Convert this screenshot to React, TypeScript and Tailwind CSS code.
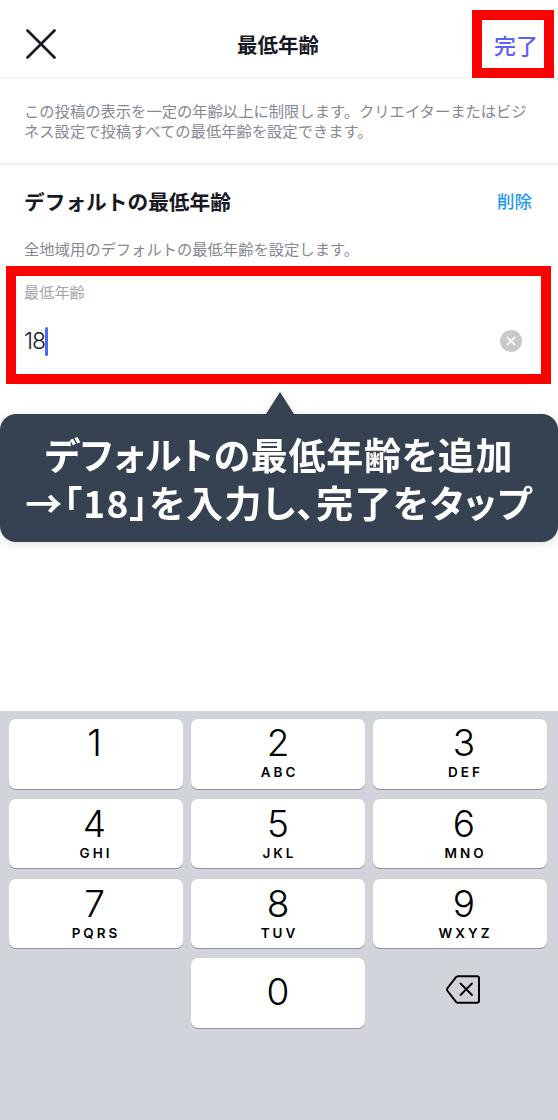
import { X } from "lucide-react";

const keys = [
  { n: "1", s: "" },
  { n: "2", s: "ABC" },
  { n: "3", s: "DEF" },
  { n: "4", s: "GHI" },
  { n: "5", s: "JKL" },
  { n: "6", s: "MNO" },
  { n: "7", s: "PQRS" },
  { n: "8", s: "TUV" },
  { n: "9", s: "WXYZ" },
];

// the labels don't sit dead centre in the outer columns
const columnOffset = ["pr-[3px]", "", "pl-[8px]"];

function Key({ n, s, center, offset, lower }: { n: string; s: string; center?: boolean; offset?: string; lower?: boolean }) {
  return (
    <div className={`h-[69.5px] bg-white rounded-[7px] shadow-[0_1px_0_#8e9095] flex flex-col items-center ${center ? "justify-center" : ""} ${lower ? "pt-[1.5px]" : ""} ${offset ?? ""}`}>
      <span className={`font-['Inter',sans-serif] font-light text-[37px] leading-[46px] text-black ${center ? "mb-[2px]" : "mt-[0.5px]"}`}>{n}</span>
      {s && (
        <span className="font-['Inter',sans-serif] text-[13.5px] leading-[14px] font-semibold tracking-[3px] text-black mt-[-1px] pl-[3px]">{s}</span>
      )}
    </div>
  );
}

export default function App() {
  return (
    <div className="relative w-[558px] h-[1120px] overflow-hidden bg-white flex flex-col font-['Noto_Sans_CJK_JP',sans-serif]">
      {/* header */}
      <div className="relative h-[78px] shrink-0 flex items-center justify-between border-b border-[#f2f2f5] pl-[26px] pr-[20px] pt-[11px]">
        <svg width="30" height="30" viewBox="0 0 30 30">
          <path d="M1.5 1.5 L28.5 28.5 M28.5 1.5 L1.5 28.5" stroke="#161823" strokeWidth="2.6" strokeLinecap="round" />
        </svg>
        <span className="text-[20.5px] font-bold text-[#161823] ml-[6px]">最低年齢</span>
        <span className="text-[22px] font-medium text-[#5a63f5] leading-none">完了</span>
      </div>

      <p className="px-[24px] pt-[22px] pb-[23px] text-[15.3px] leading-[20px] text-[#858892] border-b-2 border-[#f0f0f4]">
        この投稿の表示を一定の年齢以上に制限します。クリエイターまたはビジネス設定で投稿すべての最低年齢を設定できます。
      </p>

      <div className="flex items-center justify-between pl-[24px] pr-[26px] mt-[21px]">
        <span className="text-[20.7px] leading-[30px] font-bold text-[#161823]">デフォルトの最低年齢</span>
        <span className="text-[17.5px] leading-[30px] font-medium text-[#1d9bf0]">削除</span>
      </div>
      <p className="px-[24px] mt-[22px] text-[15.3px] leading-[20px] text-[#858892]">全地域用のデフォルトの最低年齢を設定します。</p>

      <div className="px-[24px] mt-[15px] h-[98px]">
        <div className="text-[15.2px] leading-[20px] text-[#a3a5ab] pt-[8px]">最低年齢</div>
        <div className="flex items-center justify-between mt-[24px] pr-[12px]">
          <div className="flex items-center h-[32px]">
            <span className="font-['Inter',sans-serif] font-light text-[23px] tracking-[-1px] text-[#161823]">18</span>
            <span className="w-[3px] h-[29px] bg-[#4a68f5] rounded-full" />
          </div>
          <div className="w-[22px] h-[22px] rounded-full bg-[#c9c9cb] flex items-center justify-center">
            <X size={14} color="white" strokeWidth={3} />
          </div>
        </div>
      </div>

      <div className="flex-1" />

      {/* keyboard */}
      <div className="h-[409px] shrink-0 bg-[#d1d4db] pl-[9px] pt-[8px]">
        <div className="grid grid-cols-[174px_174px_174px] gap-x-[8px] gap-y-[10.3px]">
          {keys.map((k, i) => (
            <Key key={k.n} n={k.n} s={k.s} offset={columnOffset[i % 3]} lower={i >= 3} />
          ))}
          <div />
          <Key n="0" s="" center />
          <div className="flex items-center justify-center">
            <svg width="34" height="29" viewBox="0 0 34 29" fill="none" stroke="#000" strokeWidth="2" strokeLinejoin="round" strokeLinecap="round" className="mt-[-7px] ml-[6px]">
              <path d="M12 1.2 H31 a2 2 0 0 1 2 2 V25.8 a2 2 0 0 1 -2 2 H12 a3 3 0 0 1 -2 -1 L1.6 16 a2.5 2.5 0 0 1 0 -3 L10 2.2 a3 3 0 0 1 2 -1 Z" />
              <path d="M14.5 8.5 L26 20 M26 8.5 L14.5 20" strokeWidth="1.8" />
            </svg>
          </div>
        </div>
      </div>

      {/* annotations */}
      <div className="absolute left-[472px] top-[10px] w-[82px] h-[68px] border-[10px] border-[#ff0000]" />
      <div className="absolute left-[6px] top-[266px] w-[545px] h-[118px] border-[10px] border-[#ff0000]" />

      {/* tooltip */}
      <div className="absolute left-[0px] top-[392px] w-[558px] drop-shadow-[0_2px_4px_rgba(0,0,0,0.12)]">
        <div className="mx-auto w-0 h-0 border-x-[14px] border-x-transparent border-b-[22px] border-b-[#364151] translate-x-[1px]" />
        <div className="h-[128px] rounded-[16px] bg-[#364151] text-white text-center font-bold text-[37px] leading-[48px] pt-[16px] whitespace-nowrap [font-feature-settings:'palt']">
          <div className="tracking-[0.7px]">デフォルトの最低年齢を追加</div>
          <div className="tracking-[1.3px]">→「18」を入力し、完了をタップ</div>
        </div>
      </div>
    </div>
  );
}
